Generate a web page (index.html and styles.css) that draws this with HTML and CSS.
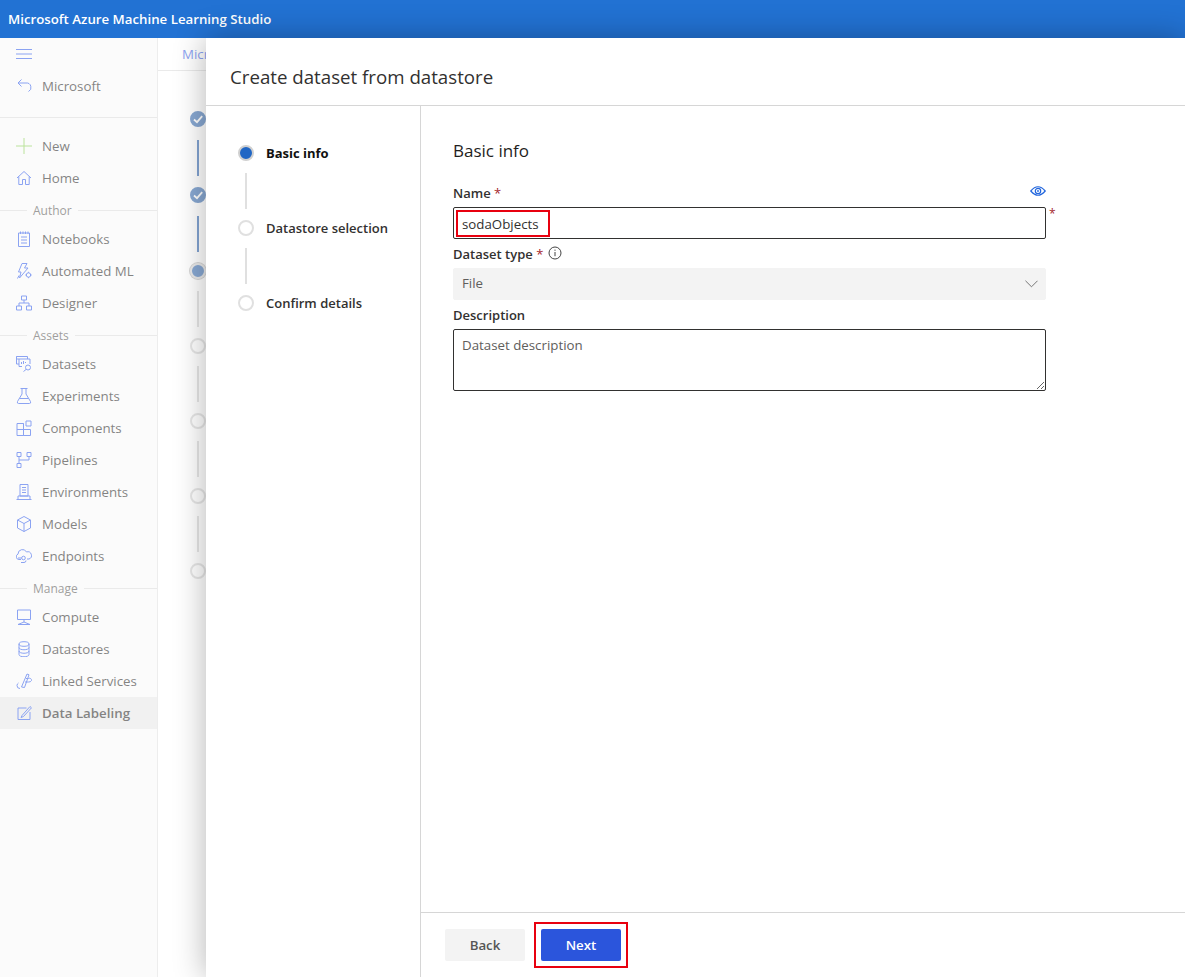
FILE: index.html
```html
<!DOCTYPE html>
<html lang="en">
<head>
<meta charset="utf-8">
<title>Create dataset from datastore</title>
<link rel="stylesheet" href="styles.css">
</head>
<body>
<header class="topbar">Microsoft Azure Machine Learning Studio</header>
<div class="workspace">
  <nav class="sidebar">
    <div class="nav-row"><svg class="ico" viewBox="0 0 16 16"><path d="M0 3.500h16M0 8h16M0 12.500h16"/></svg></div>
    <div class="nav-row"><svg class="ico" viewBox="0 0 16 16"><path d="M5.500 1.500 2 5l3.500 3.500M2 5h8a4.500 4.500 0 0 1 2.500 8.500"/></svg><span>Microsoft</span></div>
    <div class="nav-divider"></div>
    <div class="nav-row"><svg class="ico ico-green" viewBox="0 0 16 16"><path d="M8 0v16M0 8h16"/></svg><span>New</span></div>
    <div class="nav-row"><svg class="ico" viewBox="0 0 16 16"><path d="M1 8 8 1.500 15 8M2.800 6.500V14.500h3.700v-5h3v5h3.700V6.500"/></svg><span>Home</span></div>
    <div class="nav-section"><span>Author</span></div>
    <div class="nav-row"><svg class="ico" viewBox="0 0 16 16"><path d="M2.500 2h11v13.500h-11zM4.500 0.500V3M7 0.500V3M9.500 0.500V3M12 0.500V3M5 6h6M5 9h6M5 12h6"/></svg><span>Notebooks</span></div>
    <div class="nav-row"><svg class="ico" viewBox="0 0 16 16"><path d="M6 0.500h5L8.500 5H12L3.500 15l1.500-6H2.500zM3 12.500 1.500 15.500"/><circle cx="12.500" cy="12" r="2.200"/><path d="M12.500 8.800v1M12.500 14.200v1M9.300 12h1M14.700 12h1"/></svg><span>Automated ML</span></div>
    <div class="nav-row"><svg class="ico" viewBox="0 0 16 16"><path d="M5.500 1h5v4h-5zM0.500 11h5v4h-5zM10.500 11h5v4h-5zM8 5v3M3 11V8h10v3"/></svg><span>Designer</span></div>
    <div class="nav-section"><span>Assets</span></div>
    <div class="nav-row"><svg class="ico" viewBox="0 0 16 16"><path d="M3 3H0.500V0.500h11V3M3 3h11v5M3 3v7.500h3M5.500 8V6M7.500 8V5M9.500 7V6M0.500 0.500V8H3"/><circle cx="12" cy="11.500" r="2.500"/><path d="M10 13.500 7.500 15.500"/></svg><span>Datasets</span></div>
    <div class="nav-row"><svg class="ico" viewBox="0 0 16 16"><path d="M4.500 0.500h7M6 0.500v5.500L1.500 13.500q-0.800 2 1.200 2h10.600q2 0 1.200-2L10 6V0.500M3.500 10.500h9"/></svg><span>Experiments</span></div>
    <div class="nav-row"><svg class="ico" viewBox="0 0 16 16"><path d="M1 3.500h6.500v12H1zM1 9.500h13.500v6H7.500V3.500M10 1h5v5h-5z"/></svg><span>Components</span></div>
    <div class="nav-row"><svg class="ico" viewBox="0 0 16 16"><path d="M1 0.500h4v4H1zM11 0.500h4v4h-4zM1 11.500h4v4H1zM3 4.500v7M3 8h10V4.500"/></svg><span>Pipelines</span></div>
    <div class="nav-row"><svg class="ico" viewBox="0 0 16 16"><path d="M4 0.500h8v11.500H4zM6 3.500h4M6 6h4M6 8.500h4M2 12v3.500h12V12zM0.500 15.500h15"/></svg><span>Environments</span></div>
    <div class="nav-row"><svg class="ico" viewBox="0 0 16 16"><path d="M8 0.500 14.500 4v8L8 15.500 1.500 12V4zM1.500 4 8 7.500 14.500 4M8 7.500v8"/></svg><span>Models</span></div>
    <div class="nav-row"><svg class="ico" viewBox="0 0 16 16"><path d="M5 11.500H3a2.800 2.800 0 0 1-1-5.400A4.500 4.500 0 0 1 10.500 4a3.500 3.500 0 0 1 2.500 7H11"/><circle cx="7.500" cy="10" r="1.800"/><path d="M2 10h3.700M5 14.500h3a2 2 0 0 0 2-2"/></svg><span>Endpoints</span></div>
    <div class="nav-section"><span>Manage</span></div>
    <div class="nav-row"><svg class="ico" viewBox="0 0 16 16"><path d="M1.500 1h13v9.500h-13zM8 10.500v2.500M2 15.500l6-2.500 6 2.500z"/></svg><span>Compute</span></div>
    <div class="nav-row"><svg class="ico" viewBox="0 0 16 16"><ellipse cx="8" cy="3" rx="5" ry="2.300"/><path d="M3 3v10.500c0 3 10 3 10 0V3M3 6.500c0 3 10 3 10 0M3 10c0 3 10 3 10 0"/></svg><span>Datastores</span></div>
    <div class="nav-row"><svg class="ico" viewBox="0 0 16 16"><path d="M4 15.500a3 3 0 0 1-3-3 3 3 0 0 1 1.500-2.500M5.500 14 11 1l2 0.800-4.500 12.700zM10 5.500h2.500a2 2 0 0 1 3 2 3 3 0 0 1-3 1.500H9"/></svg><span>Linked Services</span></div>
    <div class="nav-row nav-active"><svg class="ico" viewBox="0 0 16 16"><path d="M14 7v7.500H2V3h8.500M6 10.500 14 1.500l1.500 1.300L7.500 11.500l-2.500 1z"/></svg><span>Data Labeling</span></div>
  </nav>
  <main class="page">
    <div class="crumbs">Microsoft</div>
    <div class="bg-steps">
      <div class="bg-dot bg-done"><svg viewBox="0 0 16 16"><path d="M4 8.500 7 11.200 12.200 5.200"/></svg></div>
      <div class="bg-line bg-line-on"></div>
      <div class="bg-dot bg-done"><svg viewBox="0 0 16 16"><path d="M4 8.500 7 11.200 12.200 5.200"/></svg></div>
      <div class="bg-line bg-line-on"></div>
      <div class="bg-dot bg-current"></div>
      <div class="bg-line bg-line-tight"></div>
      <div class="bg-dot"></div>
      <div class="bg-line bg-line-tight"></div>
      <div class="bg-dot"></div>
      <div class="bg-line bg-line-tight"></div>
      <div class="bg-dot"></div>
      <div class="bg-line bg-line-tight"></div>
      <div class="bg-dot"></div>
    </div>
  </main>
  <div class="scrim"></div>
  <section class="panel">
    <h1 class="panel-title">Create dataset from datastore</h1>
    <div class="panel-body">
      <aside class="steps">
        <div class="step step-active"><i class="step-dot"></i><span>Basic info</span></div>
        <div class="step-line"></div>
        <div class="step"><i class="step-dot"></i><span>Datastore selection</span></div>
        <div class="step-line"></div>
        <div class="step"><i class="step-dot"></i><span>Confirm details</span></div>
      </aside>
      <div class="content">
        <form class="form">
          <h2 class="form-title">Basic info</h2>
          <div class="label-row label-first">
            <label class="label">Name <b>*</b></label>
            <svg class="eye" viewBox="0 0 16 10"><path d="M0.800 5Q8-3.500 15.200 5 8 13.500 0.800 5z"/><circle cx="8" cy="5" r="2.700"/><circle class="eye-pupil" cx="8" cy="5" r="0.900"/></svg>
          </div>
          <div class="field field-text">sodaObjects<span class="mark-name"></span><span class="req">*</span></div>
          <div class="label-row">
            <label class="label">Dataset type <b>*</b></label>
            <svg class="info" viewBox="0 0 14 14"><circle cx="7" cy="7" r="6"/><path d="M7 6v4.200M7 3.600v1.200"/></svg>
          </div>
          <div class="field field-select"><span>File</span><svg class="chev" viewBox="0 0 14 8"><path d="M0.500 0.500 7 7 13.500 0.500"/></svg></div>
          <div class="label-row"><label class="label">Description</label></div>
          <div class="field field-area">Dataset description</div>
        </form>
        <footer class="actions">
          <button type="button" class="btn btn-back">Back</button>
          <button type="button" class="btn btn-next">Next<span class="mark-next"></span></button>
        </footer>
      </div>
    </div>
  </section>
</div>
</body>
</html>
```
FILE: styles.css
```css
* { box-sizing: border-box; }
html, body { margin: 0; height: 100%; overflow: hidden; }
body {
  font-family: "Open Sans", "Liberation Sans", sans-serif;
  font-size: 13.300px;
  color: #323130;
  background: #fff;
  display: flex;
  flex-direction: column;
}
.topbar {
  height: 38px;
  flex: none;
  background: #2272d3;
  color: #fff;
  font-size: 13.250px;
  font-weight: 600;
  line-height: 38px;
  padding-left: 8px;
}
.workspace { flex: 1; display: flex; position: relative; min-height: 0; }

/* left navigation */
.sidebar {
  width: 158px;
  flex: none;
  background: #f9f9f9;
  border-right: 1px solid #e1e1e1;
}
.nav-row {
  height: 32px;
  display: flex;
  align-items: center;
  gap: 10px;
  padding-left: 16px;
  color: #323130;
}
.nav-active { background: #e8e8e8; font-weight: 600; }
.ico {
  width: 16px;
  height: 16px;
  flex: none;
  fill: none;
  stroke: #3e66ea;
  stroke-width: 1;
}
.ico-green { stroke: #8fd05a; }
.nav-divider { height: 16px; border-bottom: 1px solid #ddd; margin-bottom: 12px; }
.nav-section {
  height: 29px;
  padding-top: 3px;
  display: flex;
  align-items: center;
  font-size: 12px;
  color: #605e5c;
}
.nav-section::before { content: ""; width: 27px; border-top: 1px solid #ddd; }
.nav-section::after { content: ""; flex: 1; border-top: 1px solid #ddd; }
.nav-section span { padding: 0 6px; }

/* page behind the panel */
.page { flex: 1; padding: 0; min-width: 0; }
.crumbs {
  height: 33px;
  border-bottom: 1px solid #ddd;
  padding-left: 24px;
  line-height: 32px;
  color: #3e66ea;
}
.bg-steps {
  padding: 40px 0 0 32px;
  display: flex;
  flex-direction: column;
  align-items: flex-start;
}
.bg-dot {
  width: 16px;
  height: 16px;
  border-radius: 50%;
  border: 2px solid #d6d6d6;
  background: #fff;
  flex: none;
}
.bg-dot svg { display: block; width: 16px; height: 16px; margin: -2px; fill: none; stroke: #fff; stroke-width: 1.800; }
.bg-done { background: #3a6fb5; border-color: #3a6fb5; }
.bg-current { background: #3a6fb5; box-shadow: 0 0 0 1px #bbb; border: 2px solid #ddd; }
.bg-line { width: 2px; height: 36px; margin: 13px 0 11px 7px; background: #d6d6d6; flex: none; }
.bg-line-on { background: #2f66b3; }
.bg-line-tight { margin: 12px 0 11px 7px; }
.scrim {
  position: absolute;
  inset: 0;
  background: rgba(255, 255, 255, 0.4);
}

/* slide-over panel */
.panel {
  position: absolute;
  left: 206px;
  right: 0;
  top: 0;
  bottom: 0;
  background: #fff;
  box-shadow: 0 0 30px rgba(0, 0, 0, 0.3);
  display: flex;
  flex-direction: column;
}
.panel-title {
  margin: 0;
  height: 68px;
  flex: none;
  border-bottom: 1px solid #d6d6d6;
  padding-left: 24px;
  font-size: 18.700px;
  font-weight: 400;
  line-height: 78px;
}
.panel-body { flex: 1; display: flex; min-height: 0; }
.steps {
  width: 215px;
  flex: none;
  border-right: 1px solid #d6d6d6;
  padding: 37px 0 0 32px;
}
.step { height: 20px; display: flex; align-items: center; gap: 12px; color: #323130; font-size: 13px; }
.step-dot {
  width: 16px;
  height: 16px;
  border-radius: 50%;
  border: 2px solid #e0e0e0;
  background: #fff;
  flex: none;
}
.step-active { color: #111; }
.step-active .step-dot { background: #2066c4; border-color: #d0d0d0; }
.step-line { width: 2px; height: 36px; margin: 10px 0 9px 7px; background: #e0e0e0; }
.step span { font-weight: 600; }
.step-active span { font-weight: 700; }

.content { flex: 1; display: flex; flex-direction: column; min-width: 0; }
.form { flex: 1; padding: 33px 0 0 32px; width: 625px; }
.form-title { margin: 0 0 20px; font-size: 17px; font-weight: 500; line-height: 24px; color: #1f1e1d; }
.label-row { height: 20px; display: flex; align-items: center; gap: 5px; margin-top: 5px; }
.label-first { margin-top: 0; justify-content: space-between; }
.label { font-weight: 600; font-size: 13px; color: #323130; }
.label b { color: #a4262c; font-weight: 400; }
.eye { width: 16px; height: 10px; fill: none; stroke: #2266dd; stroke-width: 1.200; margin-top: -5px; }
.eye-pupil { fill: #2266dd; stroke: none; }
.info { width: 14px; height: 14px; fill: none; stroke: #444; stroke-width: 1; margin-top: -3px; }
.field {
  position: relative;
  margin-top: 4px;
  border: 1px solid #323130;
  border-radius: 2px;
  padding: 0 8px;
}
.field-text { height: 32px; line-height: 32px; }
.field-select {
  height: 32px;
  background: #f3f3f3;
  border-color: #f3f3f3;
  color: #605e5c;
  display: flex;
  align-items: center;
  justify-content: space-between;
  padding-bottom: 2px;
}
.chev { width: 13px; height: 8px; fill: none; stroke: #6b6b6b; stroke-width: 1; margin-right: -1px; margin-top: 2px; }
.field-area {
  height: 62px;
  padding-top: 5px;
  line-height: 20px;
  color: #605e5c;
  overflow: hidden;
  resize: vertical;
}
.mark-name {
  position: absolute;
  left: 2px;
  top: 2px;
  width: 94px;
  height: 27px;
  border: 2px solid #e8000f;
}
.req { position: absolute; left: 100%; top: -4px; margin-left: 4px; color: #a4262c; line-height: 20px; font-size: 12px; }

.actions {
  height: 65px;
  flex: none;
  border-top: 1px solid #d6d6d6;
  padding: 16px 0 0 24px;
  display: flex;
  align-items: flex-start;
  gap: 16px;
}
.btn {
  position: relative;
  width: 80px;
  height: 32px;
  border: 0;
  border-radius: 2px;
  font-family: inherit;
  font-size: 13.300px;
  font-weight: 600;
}
.btn-back { background: #f3f3f3; color: #555; }
.btn-next { background: #2b55dc; color: #fff; }
.mark-next {
  position: absolute;
  left: -7px;
  right: -7px;
  top: -7px;
  bottom: -7px;
  border: 2px solid #e8000f;
}
```
